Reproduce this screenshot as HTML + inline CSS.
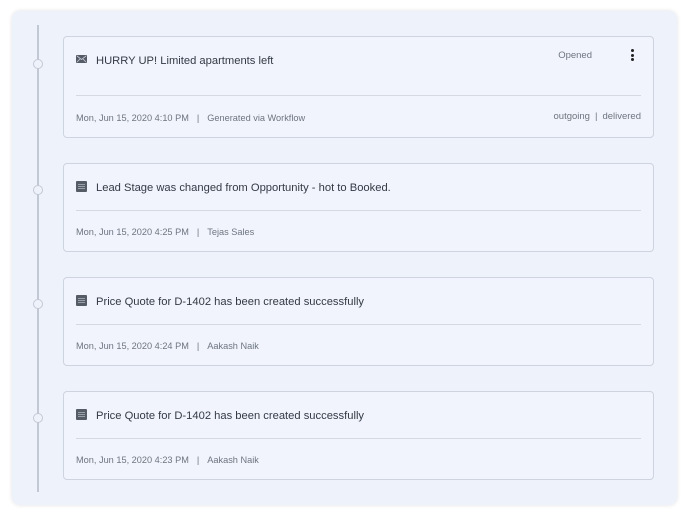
<!DOCTYPE html>
<html><head><style>
*{box-sizing:border-box;margin:0;padding:0}
body{width:689px;height:517px;background:#fff;font-family:"Liberation Sans",sans-serif;position:relative;overflow:hidden}
.panel{position:absolute;left:12px;top:11px;width:665px;height:494px;background:#eef2fb;border-radius:8px;box-shadow:0 0 4px rgba(0,0,0,0.12)}
.line{position:absolute;left:37px;top:25px;width:2px;height:467px;background:#c3c9d4}
.dot{position:absolute;left:33px;width:10px;height:10px;border-radius:50%;border:1.5px solid #c3c9d4;background:#eef2fb}
.card{position:absolute;left:63px;width:591px;background:#f1f4fc;border:1px solid #cdd3df;border-radius:4px}
.t{position:absolute;left:32px;font-size:11.2px;color:#333a45;white-space:nowrap}
.ic{position:absolute;left:12px;width:11px;height:11px;background:#555c66;border-radius:1px}
.ic.doc::after{content:"";position:absolute;left:2px;top:2px;width:7px;height:7px;background:repeating-linear-gradient(#555c66 0 1px,#9aa0aa 1px 2px)}
.hr{position:absolute;left:12px;right:12px;height:1px;background:#d3d8e2}
.f{position:absolute;left:12px;font-size:9.2px;color:#6e7580;white-space:nowrap}
.f span{margin:0 8px}
</style></head><body>
<div class="panel"></div>
<div class="line"></div>
<div class="dot" style="top:59px"></div>
<div class="dot" style="top:185px"></div>
<div class="dot" style="top:299px"></div>
<div class="dot" style="top:413px"></div>

<div class="card" style="top:36px;height:102px">
 <div class="ic" style="top:18px;height:8px;background:#555c66"><svg width="11" height="8" style="position:absolute;left:0;top:0"><path d="M1 1L5.5 4.5L10 1M1 7L4 4M10 7L7 4" stroke="#ccd" stroke-width="0.8" fill="none"/></svg></div>
 <div class="t" style="top:18px">HURRY UP! Limited apartments left</div>
 <div style="position:absolute;right:61px;top:13px;font-size:9.5px;color:#6e7580">Opened</div>
 <div style="position:absolute;left:567px;top:12px;width:3px">
  <div style="width:3px;height:3px;background:#222;border-radius:50%;margin-bottom:1.5px"></div>
  <div style="width:3px;height:3px;background:#222;border-radius:50%;margin-bottom:1.5px"></div>
  <div style="width:3px;height:3px;background:#222;border-radius:50%"></div></div>
 <div class="hr" style="top:58px"></div>
 <div class="f" style="top:76px">Mon, Jun 15, 2020 4:10 PM<span>|</span>Generated via Workflow</div>
 <div style="position:absolute;right:12px;top:74px;font-size:9.5px;color:#6e7580">outgoing<span style="margin:0 5px">|</span>delivered</div>
</div>

<div class="card" style="top:163px;height:89px">
 <div class="ic doc" style="top:17px"></div>
 <div class="t" style="top:18px">Lead Stage was changed from Opportunity - hot to Booked.</div>
 <div class="hr" style="top:46px"></div>
 <div class="f" style="top:63px">Mon, Jun 15, 2020 4:25 PM<span>|</span>Tejas Sales</div>
</div>

<div class="card" style="top:277px;height:89px">
 <div class="ic doc" style="top:17px"></div>
 <div class="t" style="top:18px">Price Quote for D-1402 has been created successfully</div>
 <div class="hr" style="top:46px"></div>
 <div class="f" style="top:63px">Mon, Jun 15, 2020 4:24 PM<span>|</span>Aakash Naik</div>
</div>

<div class="card" style="top:391px;height:89px">
 <div class="ic doc" style="top:17px"></div>
 <div class="t" style="top:18px">Price Quote for D-1402 has been created successfully</div>
 <div class="hr" style="top:46px"></div>
 <div class="f" style="top:63px">Mon, Jun 15, 2020 4:23 PM<span>|</span>Aakash Naik</div>
</div>
</body></html>
